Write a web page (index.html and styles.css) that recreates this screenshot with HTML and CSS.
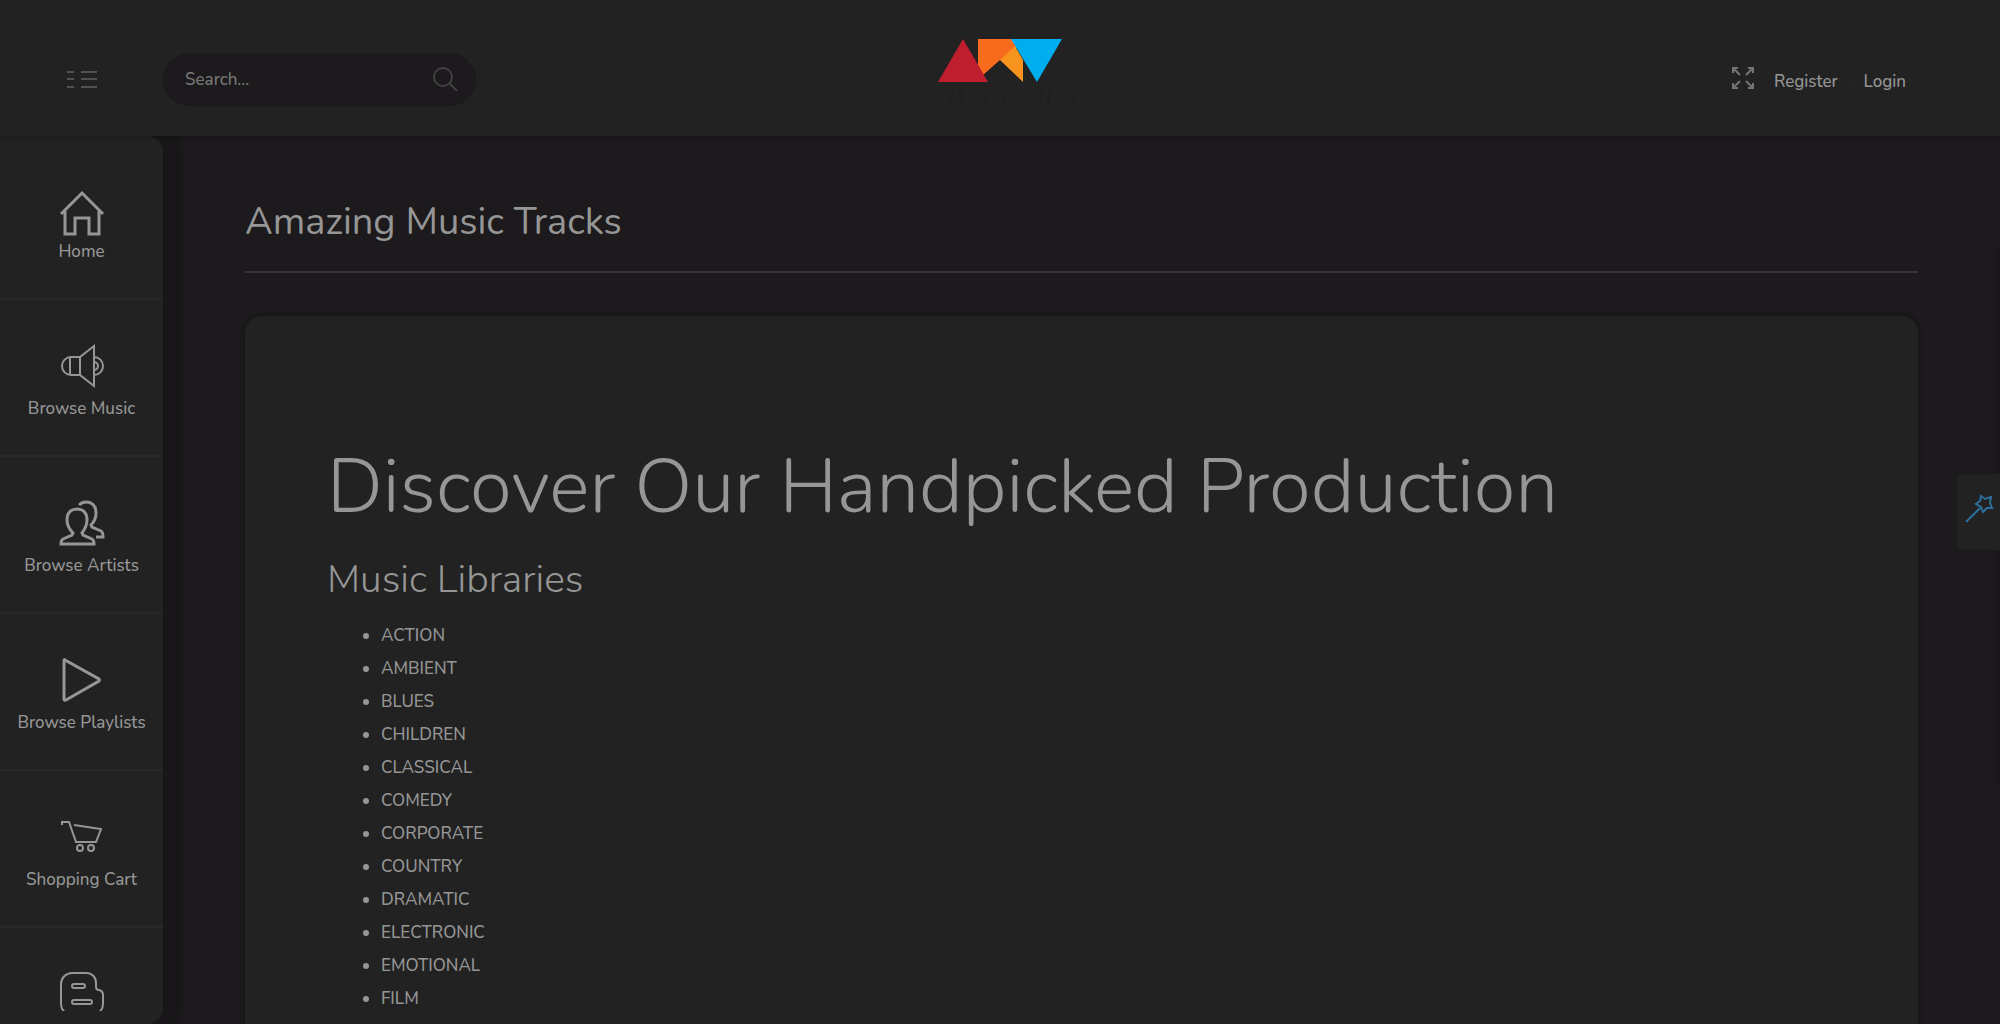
FILE: index.html
```html
<!DOCTYPE html>
<html lang="en">
<head>
<meta charset="utf-8">
<meta name="viewport" content="width=device-width, initial-scale=1">
<title>Amazing Music Tracks</title>
<link rel="stylesheet" href="styles.css">
</head>
<body>
<header class="topbar">
  <div class="topbar-left">
    <button class="menu-toggle" type="button" aria-label="Toggle menu">
      <svg width="32" height="20" viewBox="0 0 32 20"><path d="M1 3h7M1 10h7M1 18h7M15 3h16M15 10h16M15 18h16"/></svg>
    </button>
    <form class="search">
      <input class="search-input" type="text" placeholder="Search..." aria-label="Search">
      <button class="search-button" type="submit" aria-label="Submit search">
        <svg width="26" height="26" viewBox="0 0 26 26"><circle cx="11" cy="11" r="9"/><path d="M17 17l8 8"/></svg>
      </button>
    </form>
  </div>
  <a class="logo" href="#" aria-label="Amazing">
    <svg width="124" height="44" viewBox="0 0 124 44">
      <path fill="#f76b1c" d="M40 1h38v21l-16 0-17 15-5-10z"/>
      <path fill="#f7941e" d="M77 8l8 14v22L62 22z"/>
      <path fill="#00aeef" d="M73 1h51L99 44z"/>
      <path fill="#be1e2d" d="M25 1l25 43H0z"/>
    </svg>
    <span class="logo-text">AMAZING</span>
  </a>
  <nav class="account">
    <button class="fullscreen" type="button" aria-label="Full screen">
      <svg width="24" height="24" viewBox="0 0 24 24"><path d="M9 9L2 2M2 7V2h5M15 9l7-7M17 2h5v5M9 15l-7 7M2 17v5h5M15 15l7 7M17 22h5v-5"/></svg>
    </button>
    <a href="#">Register</a><span class="or">or</span><a href="#">Login</a>
  </nav>
</header>
<div class="shell">
  <nav class="sidebar">
    <ul class="side-list">
      <li><a class="side-link" href="#">
        <svg width="44" height="44" viewBox="0 -4 44 44"><path class="thick" d="M1 23L22 2l21 21M5 20v23h10V27h14v16h10V20"/></svg>
        <span>Home</span></a></li>
      <li><a class="side-link" href="#">
        <svg width="44" height="44" viewBox="0 0 44 44"><path d="M34 2v40L20 31V13zM20 13h-9a9 9 0 0 0 0 18h9M10 13v18M34 13a9 9 0 0 1 0 18M34 18a4 4 0 0 1 0 8"/></svg>
        <span>Browse Music</span></a></li>
      <li><a class="side-link" href="#">
        <svg width="44" height="44" viewBox="0 0 44 44"><path class="thick" d="M13 32c-4-4-6-8-6-13 0-7 4-11 10-11s10 4 10 11c0 5-2 9-5 13l1 2 9 4q2 1 2 5H1q0-4 2-5l9-4zM19 4c2-2 4-3 7-3 6 0 10 4 10 11 0 5-1 8-5 12l1 2 9 4q2 1 2 6h-7"/></svg>
        <span>Browse Artists</span></a></li>
      <li><a class="side-link" href="#">
        <svg width="44" height="44" viewBox="0 0 44 44"><path class="thick" d="M5 2Q4 1 4 3v38q0 2 2 1l33-19q1-1 0-2z"/></svg>
        <span>Browse Playlists</span></a></li>
      <li><a class="side-link" href="#">
        <svg width="44" height="44" viewBox="0 0 44 44"><path d="M2 10V7h7l7 20h20l5-13-27-4"/><circle cx="20" cy="33" r="3"/><circle cx="31" cy="33" r="3"/></svg>
        <span>Shopping Cart</span></a></li>
      <li><a class="side-link" href="#" aria-label="Blog">
        <svg width="44" height="44" viewBox="0 0 44 44"><path d="M12 1h14c6 0 10 4 10 10v4c0 2 1 3 3 3q4 1 4 5v9c0 6-5 11-11 11H12C6 43 1 38 1 32V12C1 6 6 1 12 1z"/><rect x="12" y="12" width="13" height="4" rx="2"/><rect x="12" y="28" width="20" height="4" rx="2"/></svg>
      </a></li>
    </ul>
  </nav>
  <main class="content">
    <h1 class="page-title">Amazing Music Tracks</h1>
    <section class="card">
      <h2 class="hero">Discover Our Handpicked Production</h2>
      <h3 class="subhead">Music Libraries</h3>
      <ul class="genres">
        <li>ACTION</li><li>AMBIENT</li><li>BLUES</li><li>CHILDREN</li><li>CLASSICAL</li><li>COMEDY</li><li>CORPORATE</li><li>COUNTRY</li><li>DRAMATIC</li><li>ELECTRONIC</li><li>EMOTIONAL</li><li>FILM</li><li>FOLK</li>
      </ul>
    </section>
  </main>
</div>
<aside class="drawer-edge">
  <button class="customizer" type="button" aria-label="Customize theme">
    <svg width="28" height="28" viewBox="0 0 28 28"><path d="M1 27l14-14M16 1l4 3 6-2-1 6 2 5-5 0-4 4-2-5-5-3 4-3z"/></svg>
  </button>
</aside>
</body>
</html>
```
FILE: styles.css
```css
* { box-sizing: border-box; }

body {
  margin: 0;
  height: 100vh;
  overflow: hidden;
  display: flex;
  flex-direction: column;
  background: #1c1a1c;
  color: #969696;
  font: 500 17px/25px "Nunito", "Open Sans", sans-serif;
}

a { color: inherit; text-decoration: none; }
ul { margin: 0; padding: 0; }
button { padding: 0; border: 0; background: none; color: inherit; cursor: pointer; }
svg { display: block; overflow: visible; fill: none; stroke: currentColor; stroke-width: 2; }
.thick { stroke-width: 3; }

.topbar {
  position: relative;
  z-index: 1;
  flex: none;
  height: 136px;
  display: grid;
  grid-template-columns: 1fr auto 1fr;
  align-items: center;
  padding: 0 66px;
  background: #222;
  box-shadow: 0 0 6px rgba(0, 0, 0, .3);
}

.topbar-left { display: flex; align-items: center; gap: 65px; padding-top: 22px; }
.menu-toggle svg { stroke-width: 1; color: #808080; }
.search {
  display: flex;
  align-items: center;
  width: 313px;
  height: 53px;
  padding: 0 18px 0 22px;
  border-radius: 27px;
  background: #1c1a1c;
}
.search-input {
  flex: 1;
  min-width: 0;
  padding: 0;
  border: 0;
  outline: 0;
  background: none;
  color: inherit;
  font: inherit;
}
.search-input::placeholder { color: #777; opacity: 1; }
.search-button { color: #424042; }

.logo { display: flex; flex-direction: column; align-items: center; gap: 3px; padding-top: 12px; }
.logo svg { stroke: none; }
.logo-text { padding-left: 12px; color: #1f1f1f; font-size: 17px; letter-spacing: 12px; }

.account {
  display: flex;
  justify-content: flex-end;
  align-items: center;
  gap: 5px;
  padding: 26px 28px 0 0;
}
.fullscreen { margin: 0 14px 7px 0; color: #747474; }
.or { color: #242424; }

.shell { flex: 1; min-height: 0; display: flex; }

.sidebar {
  flex: none;
  width: 163px;
  padding-bottom: 13px;
  border-radius: 0 16px 16px 0;
  background: #222;
  box-shadow: 0 0 6px 19px rgba(0, 0, 0, .13);
}
.side-list { height: 100%; padding-top: 7px; overflow: hidden; list-style: none; }
.side-list li { border-bottom: 2px solid #2a2929; }
.side-link {
  display: flex;
  flex-direction: column;
  align-items: center;
  gap: 8px;
  height: 155px;
  padding-top: 44px;
  white-space: nowrap;
}

.content { flex: 1; min-width: 0; padding: 61px 82px 0; }
.page-title {
  margin: 0 0 43px;
  padding-bottom: 24px;
  border-bottom: 2px solid #353335;
  font-size: 38px;
  line-height: 50px;
  font-weight: 400;
}
.card {
  padding: 124px 82px;
  border-radius: 16px;
  background: #222;
  box-shadow: 0 0 2px 3px rgba(0, 0, 0, .13);
}
.hero { margin: 0 0 22px; font-size: 76px; line-height: 94px; font-weight: 300; }
.subhead { margin: 0 0 15px; font-size: 39px; line-height: 48px; font-weight: 300; }
.genres { padding-left: 54px; line-height: 33px; }

.drawer-edge {
  position: fixed;
  top: 247px;
  right: 0;
  width: 4px;
  height: 536px;
  background: #181618;
}
.customizer {
  position: absolute;
  top: 227px;
  right: 0;
  width: 43px;
  height: 76px;
  padding: 0 0 6px 8px;
  border-radius: 6px 0 0 6px;
  background: #222;
  color: #2c6e9c;
}
```
